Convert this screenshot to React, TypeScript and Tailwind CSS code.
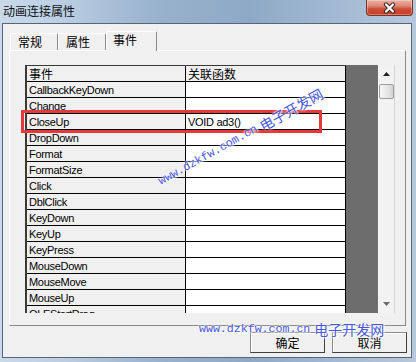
const events = [
  "CallbackKeyDown",
  "Change",
  "CloseUp",
  "DropDown",
  "Format",
  "FormatSize",
  "Click",
  "DblClick",
  "KeyDown",
  "KeyUp",
  "KeyPress",
  "MouseDown",
  "MouseMove",
  "MouseUp",
  "OLEStartDrag",
];

const binds: Record<string, string> = { CloseUp: "VOID ad3()" };

const cjk = "font-['Noto_Sans_CJK_SC',sans-serif]";
const latin = "font-['Liberation_Sans',sans-serif] text-[11px] tracking-[-0.3px]";

function Watermark({ className }: { className: string }) {
  return (
    <div
      className={
        "pointer-events-none absolute flex items-center whitespace-nowrap text-[#4757e0] [text-shadow:0_0_2px_#fff,0_0_3px_#fff,1px_1px_2px_#fff] " +
        className
      }
    >
      <span className="font-['Liberation_Mono',monospace] text-[11.6px] leading-none">www.dzkfw.com.cn</span>
      <span className="ml-[4px] font-['Noto_Sans_CJK_SC',sans-serif] text-[14px] leading-none">电子开发网</span>
    </div>
  );
}

function Tab({ label, active, width }: { label: string; active?: boolean; width: string }) {
  if (active) {
    return (
      <div
        className={`relative z-10 -mb-px h-[20px] ${width} rounded-t-[2px] border-l border-r border-t border-l-white border-r-[#8a8a8a] border-t-white bg-[#f0f0f0] pl-[6px] text-[12px] leading-[15px] text-black ${cjk}`}
      >
        {label}
      </div>
    );
  }
  return (
    <div
      className={`h-[17px] ${width} rounded-t-[2px] border-l border-r border-t border-l-white border-r-[#8a8a8a] border-t-white bg-[#f0f0f0] pl-[7px] text-[12px] leading-[16px] text-black ${cjk}`}
    >
      {label}
    </div>
  );
}

export default function App() {
  return (
    <div className="relative flex h-[362px] w-[416px] flex-col overflow-hidden bg-[linear-gradient(90deg,#c9d9ea_0%,#bccfe3_14%,#98b1cd_38%,#8ea9c6_60%,#a2b9d3_80%,#b7c8db_100%)]">
      {/* title bar */}
      <div className="flex h-[23px] flex-none items-start justify-between">
        <div className={`pl-[3px] pt-[4px] text-[12px] leading-[14px] text-[#111] ${cjk}`}>动画连接属性</div>
        <div className="mr-[3px] flex h-[16px] w-[47px] items-center justify-center rounded-b-[4px] border border-t-0 border-[#7a3328] bg-[linear-gradient(180deg,#eab0a4_0%,#df8674_40%,#cc4a35_60%,#c9402b_100%)] shadow-[inset_0_0_0_1px_rgba(255,255,255,0.3)]">
          <svg width="15" height="12" viewBox="0 0 15 12">
            <path d="M4 2.5 L11 9.5 M11 2.5 L4 9.5" stroke="#3b2a2a" strokeWidth="4.2" strokeLinecap="round" />
            <path d="M4 2.5 L11 9.5 M11 2.5 L4 9.5" stroke="#ffffff" strokeWidth="2.2" strokeLinecap="round" />
          </svg>
        </div>
      </div>

      {/* frame + client */}
      <div className="flex flex-1 flex-col pb-[4px] pl-[2px] pr-[4px]">
        <div className="flex flex-1 flex-col border border-[#56657a] bg-[#f0f0f0] pl-[6px] pr-[5px] pt-[7px]">
          {/* tabs */}
          <div className="flex h-[19px] items-end pl-[1px]">
            <Tab label="常规" width="w-[48px]" />
            <Tab label="属性" width="w-[48px]" />
            <Tab label="事件" width="w-[51px]" active />
          </div>

          {/* tab page */}
          <div className="h-[276px] flex-none border border-b-[#8a8a8a] border-l-white border-r-[#8a8a8a] border-t-white pl-[15px] pt-[14px]">
            <div className="flex h-[248px] w-[370px] overflow-hidden">
              <div className="flex w-[321px] flex-col border-l-2 border-t border-l-[#3a3a3a] border-t-[#3a3a3a]">
                <div className="flex h-[16px] flex-none border-b border-black">
                  <div className={`w-[159px] border-r border-black bg-[#f0f0f0] pl-[2px] text-[12px] leading-[15px] text-black ${cjk}`}>事件</div>
                  <div className={`w-[160px] border-r border-black bg-[#f0f0f0] pl-[2px] text-[12px] leading-[15px] text-black ${cjk}`}>关联函数</div>
                </div>
                {events.map((e) => (
                  <div key={e} className="flex h-[16px] flex-none border-b border-black">
                    <div className={`w-[159px] border-r border-black bg-[#f0f0f0] pl-[2px] pt-[1px] leading-[14px] text-black ${latin}`}>{e}</div>
                    <div className={`w-[160px] border-r border-black bg-white pl-[2px] pt-[1px] leading-[14px] text-black ${latin}`}>{binds[e] ?? ""}</div>
                  </div>
                ))}
              </div>
              <div className="w-[32px] bg-[#6d6d6d]" />
              <div className="flex w-[17px] flex-col border-l border-r border-l-[#f8f8f8] border-r-[#d6d6d6] bg-[#f2f2f2]">
                <div className="flex h-[18px] flex-none items-center justify-center">
                  <svg width="7" height="4" viewBox="0 0 7 4">
                    <path d="M0 4 L3.5 0 L7 4 Z" fill="#222" />
                  </svg>
                </div>
                <div className="mt-[1px] h-[15px] flex-none rounded-[2px] border border-[#9c9c9c] bg-[linear-gradient(90deg,#f7f7f7,#e4e4e4_60%,#d4d4d4)]" />
                <div className="flex-1" />
                <div className="flex h-[18px] flex-none items-center justify-center">
                  <svg width="7" height="4" viewBox="0 0 7 4">
                    <path d="M0 0 L3.5 4 L7 0 Z" fill="#6a6a6a" />
                  </svg>
                </div>
              </div>
            </div>
          </div>

          {/* buttons */}
          <div className="mr-[-1px] mt-[6px] flex justify-end gap-[7px]">
            <button className={`h-[21px] w-[75px] border border-[#8a8a8a] border-b-[#404040] border-r-[#404040] bg-[#f0f0f0] text-[12px] leading-[18px] text-black shadow-[inset_1px_1px_0_#fff] ${cjk}`}>
              确定
            </button>
            <button className={`h-[21px] w-[75px] border border-[#8a8a8a] border-b-[#404040] border-r-[#404040] bg-[#f0f0f0] text-[12px] leading-[18px] text-black shadow-[inset_1px_1px_0_#fff] ${cjk}`}>
              取消
            </button>
          </div>
        </div>
      </div>

      {/* highlight box */}
      <div className="pointer-events-none absolute left-[21px] top-[110px] h-[23px] w-[301px] border-[3px] border-[#e8393a]" />

      {/* watermarks */}
      <Watermark className="left-[156px] top-[176px] origin-top-left rotate-[-29deg]" />
      <Watermark className="left-[199px] top-[322px]" />
    </div>
  );
}
